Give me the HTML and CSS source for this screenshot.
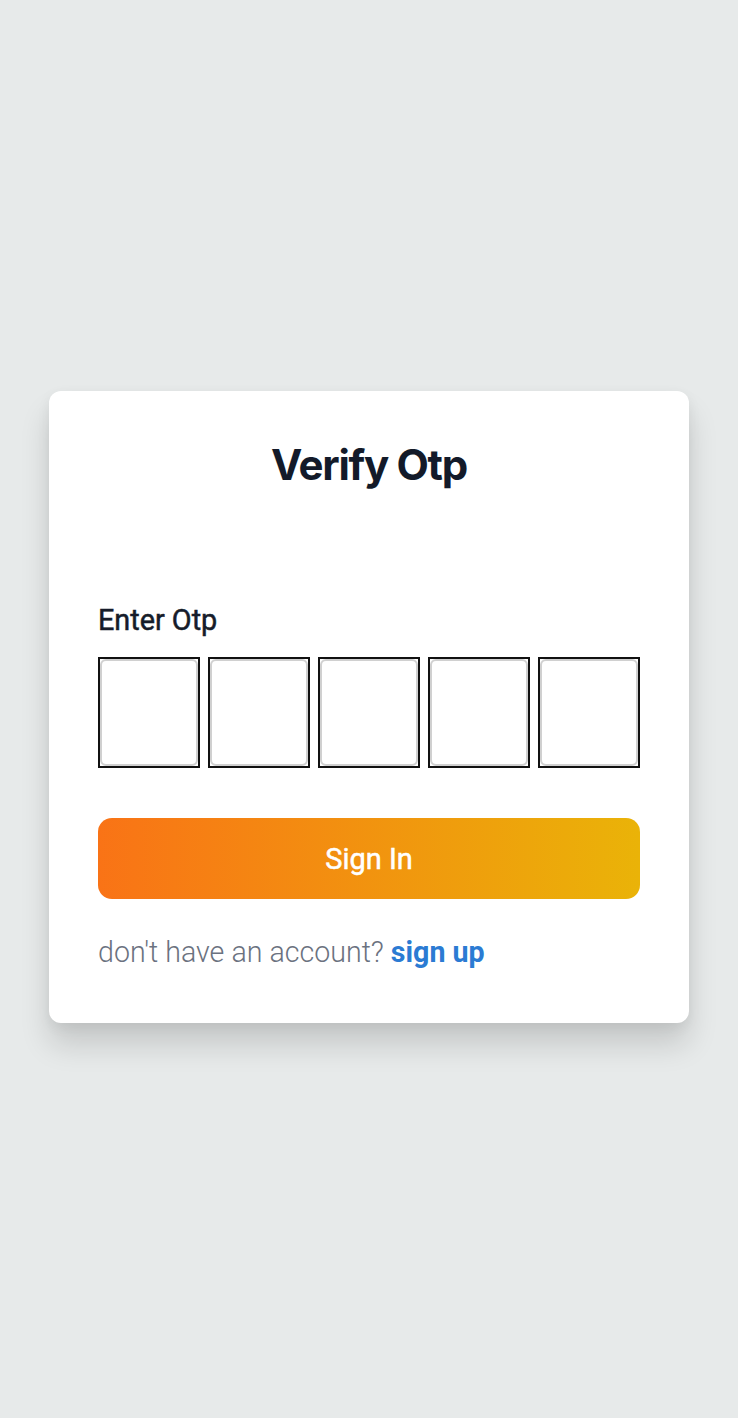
FILE: index.html
```html
<!DOCTYPE html>
<html lang="en">
<head>
<meta charset="utf-8">
<title>Verify Otp</title>
<link rel="stylesheet" href="styles.css">
</head>
<body>
<main class="page">
  <section class="card">
    <h1 class="title">Verify Otp</h1>
    <label class="label">Enter Otp</label>
    <div class="otp-row">
      <div class="otp-cell"><input class="otp-input" type="text" maxlength="1"></div>
      <div class="otp-cell"><input class="otp-input" type="text" maxlength="1"></div>
      <div class="otp-cell"><input class="otp-input" type="text" maxlength="1"></div>
      <div class="otp-cell"><input class="otp-input" type="text" maxlength="1"></div>
      <div class="otp-cell"><input class="otp-input" type="text" maxlength="1"></div>
    </div>
    <button class="btn" type="button">Sign In</button>
    <p class="footer">don't have an account? <a class="link" href="#">sign up</a></p>
  </section>
</main>
</body>
</html>
```

FILE: styles.css
```css
html, body {
  margin: 0;
  padding: 0;
}
body {
  background: #e7eaea;
  font-family: Roboto, "Liberation Sans", sans-serif;
  min-height: 1418px;
}
.page {
  display: flex;
  justify-content: center;
  padding-top: 391px;
}
.card {
  box-sizing: border-box;
  width: 640px;
  background: #fff;
  border-radius: 12px;
  padding: 49px 49px 54px 49px;
  box-shadow: 0 22px 30px rgba(0, 0, 0, 0.14), 0 4px 14px rgba(0, 0, 0, 0.06);
  display: flex;
  flex-direction: column;
}
.title {
  margin: 0;
  font-family: Inter, "Noto Sans", sans-serif;
  font-weight: 700;
  font-size: 42px;
  line-height: 50px;
  color: #131a29;
  text-align: center;
  letter-spacing: -1.3px;
}
.label {
  margin-top: 114px;
  font-size: 28.8px;
  line-height: 32px;
  font-weight: 400;
  -webkit-text-stroke: 0.5px #161c2a;
  color: #161c2a;
}
.otp-row {
  margin-top: 21px;
  display: flex;
  gap: 8px;
}
.otp-cell {
  box-sizing: border-box;
  width: 102px;
  height: 111px;
  border: 2px solid #111;
  display: flex;
}
.otp-input {
  box-sizing: border-box;
  flex: 1;
  width: 100%;
  margin: 0;
  border: 2px solid #d0d0d0;
  border-radius: 6px;
  background: #fff;
  outline: none;
  font-size: 28px;
  text-align: center;
}
.btn {
  margin-top: 50px;
  height: 81px;
  border: none;
  border-radius: 14px;
  background: linear-gradient(90deg, #f97316 0%, #eab308 100%);
  color: #fff;
  font-family: Roboto, "Liberation Sans", sans-serif;
  font-size: 29px;
  font-weight: 400;
  -webkit-text-stroke: 0.5px #fff;
  padding: 0;
}
.footer {
  margin: 37px 0 0 0;
  font-size: 28.6px;
  line-height: 33px;
  font-weight: 300;
  color: #6b7280;
}
.link {
  color: #2b7bd3;
  font-weight: 700;
  text-decoration: none;
}
```
